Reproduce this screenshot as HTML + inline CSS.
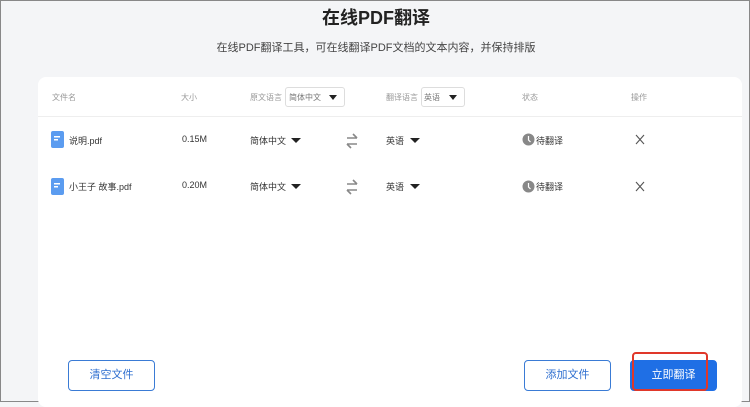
<!DOCTYPE html>
<html><head><meta charset="utf-8"><style>
*{margin:0;padding:0;box-sizing:border-box}
body{width:750px;height:402px;overflow:hidden;background:#f4f5f7;font-family:"Liberation Sans","Noto Sans CJK SC",sans-serif;position:relative;border:1px solid #888;}
.a{position:absolute;white-space:nowrap}
h1{position:absolute;left:0;width:750px;top:3px;text-align:center;font-size:18px;font-weight:bold;color:#222}
.sub{left:0;width:750px;text-align:center;top:38px;font-size:11px;color:#444}
.card{position:absolute;left:37px;top:76px;width:704px;height:330px;background:#fff;border-radius:8px}
.hd{font-size:8px;color:#999}
.t{font-size:9px;color:#333}
.sel{position:absolute;border:1px solid #ddd;border-radius:3px;height:20px;background:#fff}
.tri{position:absolute;width:0;height:0;border-left:4px solid transparent;border-right:4px solid transparent;border-top:5px solid #222}
.tb{border-left-width:5px;border-right-width:5px;border-top-width:5px}
.btn{position:absolute;top:359px;width:87px;height:31px;border:1px solid #3a7bd5;border-radius:4px;font-size:11px;color:#2f6fd0;text-align:center;line-height:29px;background:#fff}
</style></head><body>
<h1>在线PDF翻译</h1>
<div class="a sub">在线PDF翻译工具，可在线翻译PDF文档的文本内容，并保持排版</div>
<div class="card"></div>
<div class="a" style="left:37px;top:115px;width:704px;height:1px;background:#eee"></div>
<div class="a hd" style="left:51px;top:91px">文件名</div>
<div class="a hd" style="left:180px;top:91px">大小</div>
<div class="a hd" style="left:249px;top:91px">原文语言</div>
<div class="sel" style="left:284px;top:86px;width:60px"></div>
<div class="a hd" style="left:288px;top:91px;color:#777">简体中文</div>
<div class="tri" style="left:328px;top:94px"></div>
<div class="a hd" style="left:385px;top:91px">翻译语言</div>
<div class="sel" style="left:420px;top:86px;width:44px"></div>
<div class="a hd" style="left:423px;top:91px;color:#777">英语</div>
<div class="tri" style="left:448px;top:94px"></div>
<div class="a hd" style="left:521px;top:91px">状态</div>
<div class="a hd" style="left:630px;top:91px">操作</div>

<svg class="a" style="left:50px;top:130px" width="14" height="17"><rect width="13" height="17" rx="2" fill="#5b9cf0"/><rect x="3" y="5" width="6" height="1.5" fill="#fff"/><rect x="3" y="8" width="4" height="1.5" fill="#fff"/></svg>
<div class="a t" style="left:68px;top:133px">说明.pdf</div>
<div class="a t" style="left:181px;top:133px">0.15M</div>
<div class="a t" style="left:249px;top:133px">简体中文</div>
<div class="tri tb" style="left:290px;top:137px"></div>
<svg class="a" style="left:344px;top:132px" width="14" height="16" fill="none" stroke="#888" stroke-width="1.6"><path d="M2 5h10M8 1l4 4M12 11H2M6 15l-4-4"/></svg>
<div class="a t" style="left:385px;top:133px">英语</div>
<div class="tri tb" style="left:409px;top:137px"></div>
<svg class="a" style="left:521px;top:132px" width="13" height="13"><circle cx="6.5" cy="6.5" r="6" fill="#888"/><path d="M6.5 3v4l2 2" stroke="#fff" stroke-width="1.2" fill="none"/></svg>
<div class="a t" style="left:535px;top:133px">待翻译</div>
<svg class="a" style="left:634px;top:133px" width="10" height="11" stroke="#555" stroke-width="1.1"><path d="M1 1l8 9M9 1l-8 9"/></svg>

<svg class="a" style="left:50px;top:177px" width="14" height="17"><rect width="13" height="17" rx="2" fill="#5b9cf0"/><rect x="3" y="5" width="6" height="1.5" fill="#fff"/><rect x="3" y="8" width="4" height="1.5" fill="#fff"/></svg>
<div class="a t" style="left:68px;top:179px">小王子 故事.pdf</div>
<div class="a t" style="left:181px;top:179px">0.20M</div>
<div class="a t" style="left:249px;top:179px">简体中文</div>
<div class="tri tb" style="left:290px;top:183px"></div>
<svg class="a" style="left:344px;top:178px" width="14" height="16" fill="none" stroke="#888" stroke-width="1.6"><path d="M2 5h10M8 1l4 4M12 11H2M6 15l-4-4"/></svg>
<div class="a t" style="left:385px;top:179px">英语</div>
<div class="tri tb" style="left:409px;top:183px"></div>
<svg class="a" style="left:521px;top:179px" width="13" height="13"><circle cx="6.5" cy="6.5" r="6" fill="#888"/><path d="M6.5 3v4l2 2" stroke="#fff" stroke-width="1.2" fill="none"/></svg>
<div class="a t" style="left:535px;top:179px">待翻译</div>
<svg class="a" style="left:634px;top:180px" width="10" height="11" stroke="#555" stroke-width="1.1"><path d="M1 1l8 9M9 1l-8 9"/></svg>

<div class="btn" style="left:67px">清空文件</div>
<div class="btn" style="left:523px">添加文件</div>
<div class="btn" style="left:629px;background:#1f6fe5;color:#fff;border-color:#1f6fe5">立即翻译</div>
<div class="a" style="left:631px;top:351px;width:76px;height:39px;border:2px solid #e0382a;border-radius:4px"></div>
</body></html>
